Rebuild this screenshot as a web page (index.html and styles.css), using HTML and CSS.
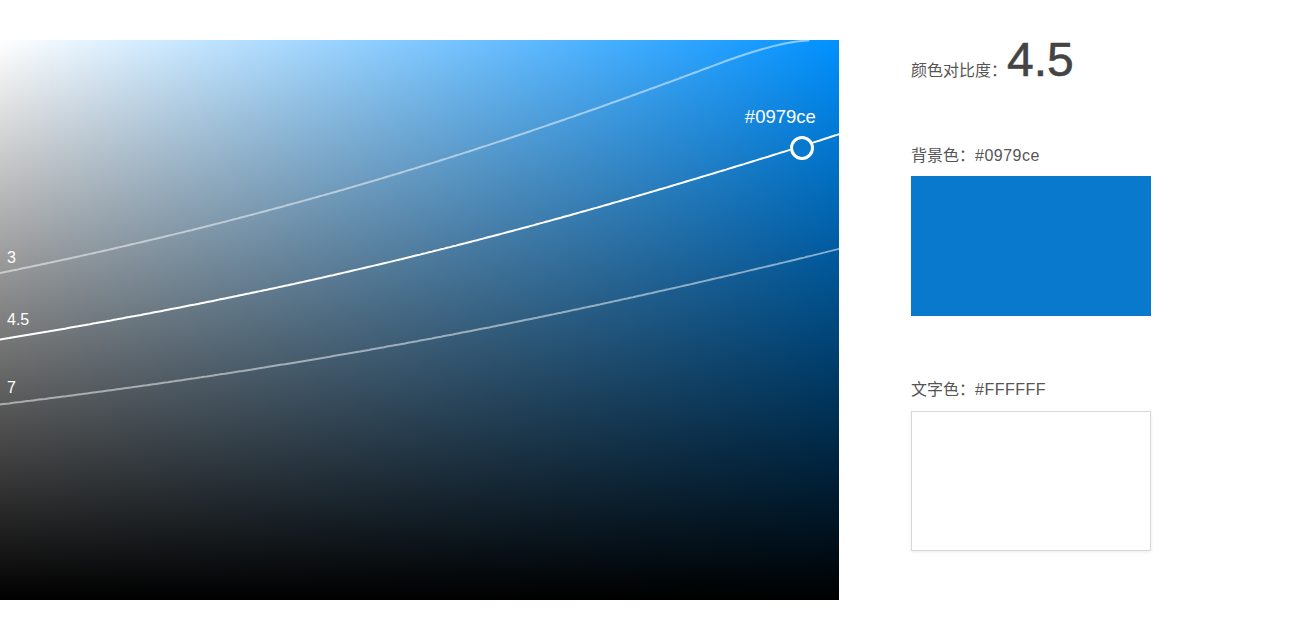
FILE: index.html
```html
<!DOCTYPE html>
<html lang="zh-CN">
<head>
<meta charset="utf-8">
<title>颜色对比度</title>
<link rel="stylesheet" href="styles.css">
</head>
<body>
<div class="app">
  <div class="picker" id="picker" data-color="#0979ce">
    <svg class="curves" width="839" height="560" viewBox="0 0 839 560">
      <path id="c3" class="curve faint" d=""></path>
      <path id="c45" class="curve main" d=""></path>
      <path id="c7" class="curve faint" d=""></path>
    </svg>
    <span class="ratio-label" id="l3">3</span>
    <span class="ratio-label" id="l45">4.5</span>
    <span class="ratio-label" id="l7">7</span>
    <div class="marker" id="marker">
      <span class="marker-text">#0979ce</span>
      <span class="marker-dot"></span>
    </div>
  </div>
  <div class="panel">
    <div class="contrast">
      <span class="contrast-label">颜色对比度：</span><span class="contrast-value">4.5</span>
    </div>
    <div class="field field-bg">
      <div class="field-label">背景色：<span class="code">#0979ce</span></div>
      <div class="swatch swatch-bg"></div>
    </div>
    <div class="field field-fg">
      <div class="field-label">文字色：<span class="code">#FFFFFF</span></div>
      <div class="swatch swatch-fg"></div>
    </div>
  </div>
</div>
<script src="script.js"></script>
</body>
</html>
```
FILE: styles.css
```css
* { box-sizing: border-box; }
html, body { margin: 0; padding: 0; background: #fff; }
body {
  font-family: "Liberation Sans", "Noto Sans CJK SC", sans-serif;
  color: #555;
}
.app {
  display: flex;
  padding-top: 40px;
}
.picker {
  position: relative;
  flex: 0 0 839px;
  width: 839px;
  height: 560px;
  background:
    linear-gradient(to top, #000, rgba(0,0,0,0)),
    linear-gradient(to right, #fff, rgba(255,255,255,0)),
    #0091ff;
  overflow: hidden;
}
.curves {
  position: absolute;
  left: 0;
  top: 0;
  display: block;
}
.curve {
  fill: none;
  stroke: #fff;
  stroke-linejoin: round;
  stroke-linecap: round;
}
.curve.main { stroke-width: 2; }
.curve.faint { stroke-width: 2; stroke-opacity: 0.5; }
.ratio-label {
  position: absolute;
  left: 7px;
  color: #fff;
  font-size: 16px;
  line-height: 18px;
}
.marker {
  position: absolute;
  width: 0;
  height: 0;
}
.marker-dot {
  position: absolute;
  left: -12px;
  top: -12px;
  width: 24px;
  height: 24px;
  border-radius: 50%;
  border: 3.5px solid #fff;
  background: #0979ce;
}
.marker-text {
  position: absolute;
  left: -60px;
  top: -42px;
  width: 76px;
  text-align: center;
  color: #fff;
  font-size: 18.5px;
  line-height: 22px;
  white-space: nowrap;
}
.panel {
  margin-left: 72px;
  width: 240px;
  display: flex;
  flex-direction: column;
}
.contrast {
  display: flex;
  align-items: baseline;
  height: 40px;
  line-height: 40px;
}
.contrast-label {
  font-size: 16px;
  color: #555;
}
.contrast-value {
  font-size: 48px;
  color: #444;
  -webkit-text-stroke: 0.6px #444;
}
.field-label {
  font-size: 16px;
  line-height: 24px;
  color: #555;
}
.code { letter-spacing: 0.5px; }
.field-bg { margin-top: 64px; }
.field-fg { margin-top: 62px; }
.swatch {
  margin-top: 8px;
  width: 240px;
  height: 140px;
}
.field-fg .swatch { margin-top: 9px; }
.swatch-bg { background: #0979ce; }
.swatch-fg {
  background: #fff;
  border: 1px solid #d8d8d8;
  box-shadow: 0 1px 3px rgba(0,0,0,0.08);
}
```
FILE: script.js
```js
(function () {
  var W = 839, H = 560;
  var picker = document.getElementById('picker');
  var hex = picker.getAttribute('data-color');
  var r = parseInt(hex.substr(1, 2), 16) / 255;
  var g = parseInt(hex.substr(3, 2), 16) / 255;
  var b = parseInt(hex.substr(5, 2), 16) / 255;
  var max = Math.max(r, g, b), min = Math.min(r, g, b), d = max - min;
  var h;
  if (max === r) h = ((g - b) / d) % 6;
  else if (max === g) h = (b - r) / d + 2;
  else h = (r - g) / d + 4;
  h *= 60; if (h < 0) h += 360;
  var S = d / max, V = max;

  function hueColor(h) {
    var x = 1 - Math.abs((h / 60) % 2 - 1);
    if (h < 60) return [1, x, 0];
    if (h < 120) return [x, 1, 0];
    if (h < 180) return [0, 1, x];
    if (h < 240) return [0, x, 1];
    if (h < 300) return [x, 0, 1];
    return [1, 0, x];
  }
  var hc = hueColor(h);
  function lin(c) { return c <= 0.03928 ? c / 12.92 : Math.pow((c + 0.055) / 1.055, 2.4); }
  function lum(s, v) {
    var ch = hc.map(function (k) { return v * (1 - s * (1 - k)); });
    return 0.2126 * lin(ch[0]) + 0.7152 * lin(ch[1]) + 0.0722 * lin(ch[2]);
  }
  function solveV(s, L) {
    if (lum(s, 1) < L) return null;
    var lo = 0, hi = 1;
    for (var i = 0; i < 40; i++) {
      var m = (lo + hi) / 2;
      if (lum(s, m) < L) lo = m; else hi = m;
    }
    return (lo + hi) / 2;
  }
  function curve(ratio) {
    var L = 1.05 / ratio - 0.05;
    var pts = [];
    var topHit = false;
    for (var x = 0; x <= W + 2.9; x += 3) {
      var xx = Math.min(x, W);
      var v = solveV(xx / W, L);
      if (v === null) { topHit = true; break; }
      var y = (1 - v) * H;
      if (y < 26) { topHit = true; break; }
      pts.push([xx, y]);
    }
    var path = pts.map(function (p, i) {
      return (i ? 'L' : 'M') + p[0].toFixed(1) + ' ' + p[1].toFixed(1);
    }).join(' ');
    if (topHit) {
      var last = pts[pts.length - 1];
      var prev = pts[pts.length - 2];
      var slope = (last[1] - prev[1]) / (last[0] - prev[0]);
      var cx = last[0] + (2 - last[1]) / slope;
      var ex = cx + 32;
      path += ' Q' + cx.toFixed(1) + ' 1.5 ' + ex.toFixed(1) + ' 0.5';
    }
    return { d: path, y0: pts[0][1] };
  }
  var defs = [[3, 'c3', 'l3', 15], [4.5, 'c45', 'l45', 19], [7, 'c7', 'l7', 16]];
  defs.forEach(function (dd) {
    var c = curve(dd[0]);
    document.getElementById(dd[1]).setAttribute('d', c.d);
    document.getElementById(dd[2]).style.top = (c.y0 - dd[3] - 9) + 'px';
  });
  var mk = document.getElementById('marker');
  mk.style.left = (S * W) + 'px';
  mk.style.top = ((1 - V) * H) + 'px';
})();
```
